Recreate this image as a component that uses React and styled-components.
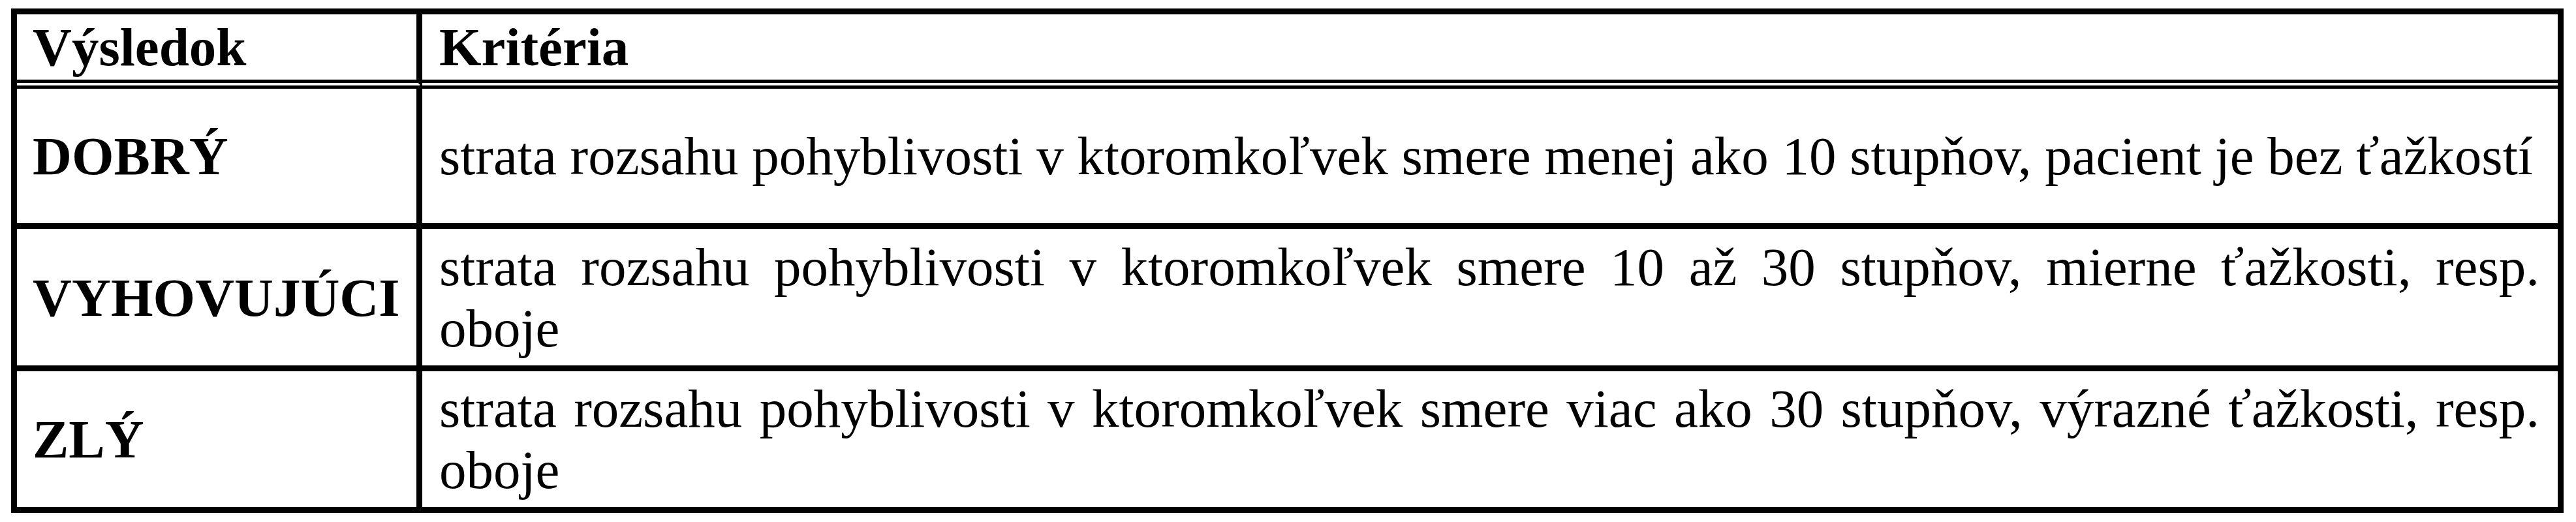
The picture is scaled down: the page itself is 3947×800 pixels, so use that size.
import React from "react";
import styled, { createGlobalStyle } from "styled-components";

const GlobalStyle = createGlobalStyle`
  body {
    margin: 0;
    background: #fff;
  }
`;

const Page = styled.div`
  padding: 13px 0 0 17px;
`;

const Table = styled.table`
  border-collapse: separate;
  border-spacing: 0;
  table-layout: fixed;
  width: 3911px;
  border: 9px solid #000;
  font-family: "Liberation Serif", "Times New Roman", serif;
  font-size: 83px;
  color: #000;
`;

const Row = styled.tr`
  height: ${(p) => p.$h}px;
`;

const Cell = styled.td`
  box-sizing: border-box;
  vertical-align: middle;
  padding: 0 28px 0 26px;
  line-height: 94px;
  text-align: ${(p) => (p.$head ? "left" : "justify")};
  font-weight: ${(p) => (p.$bold ? 700 : 400)};
  border-bottom: ${(p) =>
    p.$head ? "14px double #000" : p.$last ? "none" : "9px solid #000"};
`;

const LabelCell = styled(Cell)`
  width: 621px;
  padding: 0 10px 0 24px;
  border-right: 9px solid #000;
  text-align: left;
`;

const rows = [
  {
    label: "DOBRÝ",
    text: "strata rozsahu pohyblivosti v ktoromkoľvek smere menej ako 10 stupňov, pacient je bez ťažkostí",
    h: 215,
  },
  {
    label: "VYHOVUJÚCI",
    text: "strata rozsahu pohyblivosti v ktoromkoľvek smere 10 až 30 stupňov, mierne ťažkosti, resp. oboje",
    h: 218,
  },
  {
    label: "ZLÝ",
    text: "strata rozsahu pohyblivosti v ktoromkoľvek smere viac ako 30 stupňov, výrazné ťažkosti, resp. oboje",
    h: 208,
  },
];

export default function App() {
  return (
    <>
      <GlobalStyle />
      <Page>
        <Table>
          <tbody>
            <Row $h={114}>
              <LabelCell as="th" $head $bold>
                Výsledok
              </LabelCell>
              <Cell as="th" $head $bold>
                Kritéria
              </Cell>
            </Row>
            {rows.map((r, i) => (
              <Row key={r.label} $h={r.h}>
                <LabelCell $bold $last={i === rows.length - 1}>
                  {r.label}
                </LabelCell>
                <Cell $last={i === rows.length - 1}>{r.text}</Cell>
              </Row>
            ))}
          </tbody>
        </Table>
      </Page>
    </>
  );
}
